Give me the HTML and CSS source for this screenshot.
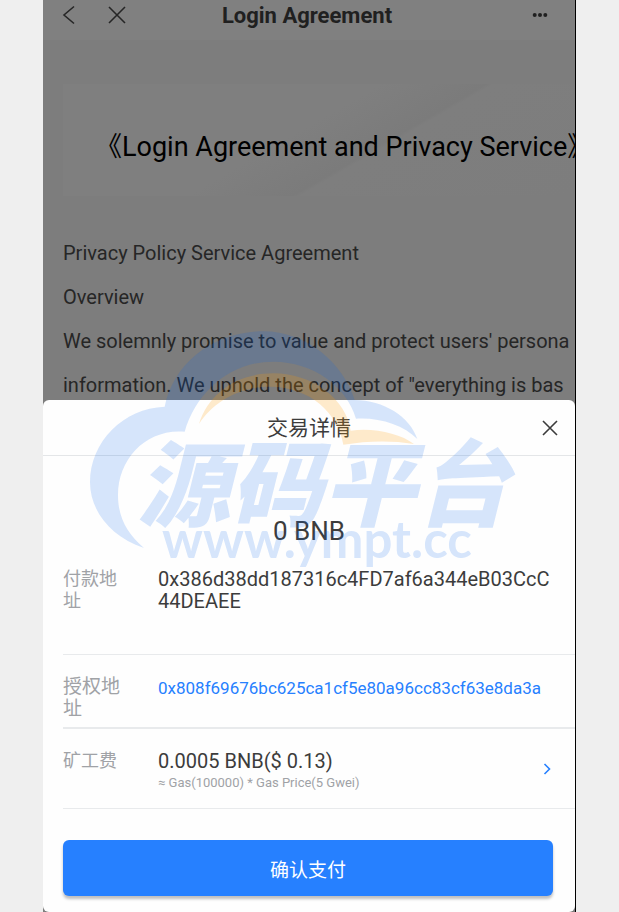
FILE: index.html
```html
<!DOCTYPE html>
<html lang="zh-CN">
<head>
    <meta charset="UTF-8">
    <meta name="viewport" content="width=device-width, initial-scale=1.0">
    <title>Login Agreement</title>
    <link rel="stylesheet" href="styles.css">
</head>
<body>
    <div class="phone">
        <div class="page" lang="en">
            <header class="navbar">
                <div class="nav-left">
                    <button class="icon-button" aria-label="Back">
                        <svg width="14" height="20" viewBox="0 0 14 20"><path d="M12 1.5L2 10L12 18.5"/></svg>
                    </button>
                    <button class="icon-button" aria-label="Close page">
                        <svg width="18" height="18" viewBox="0 0 18 18"><path d="M1 1L17 17M17 1L1 17"/></svg>
                    </button>
                </div>
                <h1>Login Agreement</h1>
                <div class="nav-right">
                    <button class="icon-button" aria-label="More">
                        <svg class="dots" width="16" height="6" viewBox="0 0 16 6"><circle cx="2.7" cy="3" r="2"/><circle cx="8" cy="3" r="2"/><circle cx="13.3" cy="3" r="2"/></svg>
                    </button>
                </div>
            </header>
            <article class="agreement">
                <div class="banner">《Login Agreement and Privacy Service》</div>
                <p>Privacy Policy Service Agreement</p>
                <p>Overview</p>
                <p>We solemnly promise to value and protect users' persona</p>
                <p>information. We uphold the concept of "everything is bas</p>
            </article>
        </div>

        <section class="sheet">
            <header class="sheet-header">
                <h2>交易详情</h2>
                <button class="icon-button" aria-label="关闭">
                    <svg width="16" height="16" viewBox="0 0 16 16"><path d="M1 1L15 15M15 1L1 15"/></svg>
                </button>
            </header>
            <div class="amount">0 BNB</div>
            <dl class="details">
                <div class="row payer">
                    <dt>付款地址</dt>
                    <dd>0x386d38dd187316c4FD7af6a344eB03CcC44DEAEE</dd>
                </div>
                <div class="row spender">
                    <dt>授权地址</dt>
                    <dd><a href="#">0x808f69676bc625ca1cf5e80a96cc83cf63e8da3a</a></dd>
                </div>
                <div class="row fee">
                    <dt>矿工费</dt>
                    <dd>
                        0.0005 BNB($ 0.13)
                        <small>≈ Gas(100000) * Gas Price(5 Gwei)</small>
                    </dd>
                    <dd class="arrow">
                        <svg width="8" height="12" viewBox="0 0 8 12"><path d="M1.5 1L6.5 6L1.5 11"/></svg>
                    </dd>
                </div>
            </dl>
            <button class="confirm">确认支付</button>
        </section>

        <!-- Site watermark over everything -->
        <div class="watermark">
            <svg class="cloud" viewBox="0 0 1350 780">
                <path class="blue" d="M192 684C90 650 30 570 30 487C30 365 130 265 254 260C280 130 400 34 550 34C680 34 790 130 824 240C910 240 990 290 1012 357C970 315 900 292 828 296C800 200 700 125 580 125C450 125 350 215 314 335C200 325 114 415 114 525C114 590 140 640 192 684Z"/>
                <path class="orange" d="M357 312C385 220 470 160 580 160C700 160 800 240 812 332C880 322 960 340 1002 372C930 360 860 363 790 374C775 280 690 200 570 200C480 200 400 245 357 312Z"/>
            </svg>
            <div class="brand">源码平台</div>
            <div class="site">www.ympt.cc</div>
        </div>
    </div>
</body>
</html>
```
FILE: styles.css
```css
* {
    box-sizing: border-box;
}
body {
    margin: 0;
    padding: 0 43px;
    background-color: #efefef;
    color: #3c3c3c;
    font-family: Roboto, 'Noto Sans CJK SC', sans-serif;
}
h1, h2, p, dl, dd {
    margin: 0;
}
.phone {
    position: relative;
    display: flex;
    flex-direction: column;
    min-height: 100vh;
    overflow: hidden;
    background-color: #7d7d7d;
    border-right: 1px solid #000;
}
.icon-button {
    display: flex;
    padding: 0;
    border: none;
    background: none;
    cursor: pointer;
}
.icon-button svg,
.arrow svg {
    fill: none;
    stroke: #3c3c3c;
    stroke-width: 1.6;
}

/* Agreement page behind the sheet */
.page {
    flex: 1;
    overflow: hidden;
    color: #262626;
}
.navbar {
    display: grid;
    grid-template-columns: 1fr auto 1fr;
    align-items: center;
    height: 40px;
    padding: 0 23px 10px 19px;
    background-color: #808080;
}
.nav-left {
    display: flex;
    align-items: center;
    gap: 32px;
}
.nav-right {
    display: flex;
    justify-content: flex-end;
    padding-right: 4px;
}
.navbar .icon-button svg {
    stroke: #262626;
}
.navbar .icon-button .dots {
    fill: #202020;
    stroke: none;
}
h1 {
    padding-top: 2px;
    font-size: 22px;
    line-height: 28px;
    font-weight: 700;
    color: #202020;
}
.agreement {
    padding: 44px 0 0 20px;
    white-space: nowrap;
}
.banner {
    height: 112px;
    margin-bottom: 35px;
    padding-left: 32px;
    background: linear-gradient(150deg, #7f7f7f 45%, #7b7b7b 60%, #7e7e7e 61%, #7d7d7d);
    color: #000;
    font-size: 27px;
    line-height: 126px;
}
.agreement p {
    font-size: 20px;
    line-height: 44px;
}

/* Transaction sheet */
.sheet {
    position: relative;
    margin-top: -12px;
    padding-bottom: 16px;
    background-color: #fefefe;
    border-radius: 6px;
}
.sheet-header {
    display: grid;
    grid-template-columns: 1fr auto 1fr;
    align-items: center;
    height: 56px;
    padding: 0 17px;
    border-bottom: 1px solid #e4e6e8;
}
.sheet-header h2 {
    grid-column: 2;
    font-size: 21px;
    line-height: 30px;
    font-weight: 400;
}
.sheet-header .icon-button {
    justify-self: end;
}
.amount {
    padding: 60px 0 22px;
    font-size: 26px;
    line-height: 30px;
    text-align: center;
}
.details {
    padding-left: 20px;
}
.row {
    display: grid;
    grid-template-columns: 60px 1fr auto;
    column-gap: 35px;
    padding-right: 22px;
    border-bottom: 1px solid #e8eaec;
    font-size: 20px;
    line-height: 22px;
}
.row dt {
    color: #a0a2a6;
    font-size: 18px;
}
.row dd {
    word-break: break-all;
}
.payer {
    grid-template-columns: 60px 1fr;
    height: 87px;
}
.spender {
    grid-template-columns: 60px 1fr;
    height: 74px;
    padding-top: 21px;
    border-bottom: 2px solid #e8eaec;
}
.row.spender dt {
    font-size: 19px;
}
.spender a {
    color: #2680ff;
    font-size: 17px;
    text-decoration: none;
}
.fee {
    height: 80px;
    padding-top: 21px;
}
.fee small {
    display: block;
    color: #a0a2a6;
    font-size: 13px;
}
.fee .arrow {
    padding-top: 13px;
    padding-right: 2px;
}
.arrow svg {
    display: block;
    stroke: #2680ff;
}
.confirm {
    display: block;
    width: calc(100% - 42px);
    height: 56px;
    margin: 31px 22px 0 20px;
    border: none;
    border-radius: 6px;
    background-color: #2680ff;
    box-shadow: 0 3px 3px rgba(0, 0, 0, 0.25);
    color: #fff;
    font-family: inherit;
    font-size: 19px;
    cursor: pointer;
}

/* Watermark */
.watermark {
    position: absolute;
    top: 320px;
    left: 50%;
    width: 450px;
    margin-left: -229px;
    padding-top: 115px;
    color: rgba(11, 103, 237, 0.165);
    text-align: center;
    white-space: nowrap;
    pointer-events: none;
}
.cloud {
    position: absolute;
    top: 0;
    left: 0;
    width: 450px;
    height: 260px;
}
.cloud .blue {
    fill: rgba(11, 103, 237, 0.165);
}
.cloud .orange {
    fill: rgba(255, 155, 0, 0.2);
}
.brand {
    padding-left: 36px;
    font-family: 'Noto Sans CJK SC', sans-serif;
    font-size: 93px;
    font-style: italic;
    font-weight: 900;
    line-height: 88px;
}
.site {
    padding-left: 24px;
    font-family: Lato, sans-serif;
    font-size: 51px;
    font-weight: 700;
    line-height: 32px;
}
```
